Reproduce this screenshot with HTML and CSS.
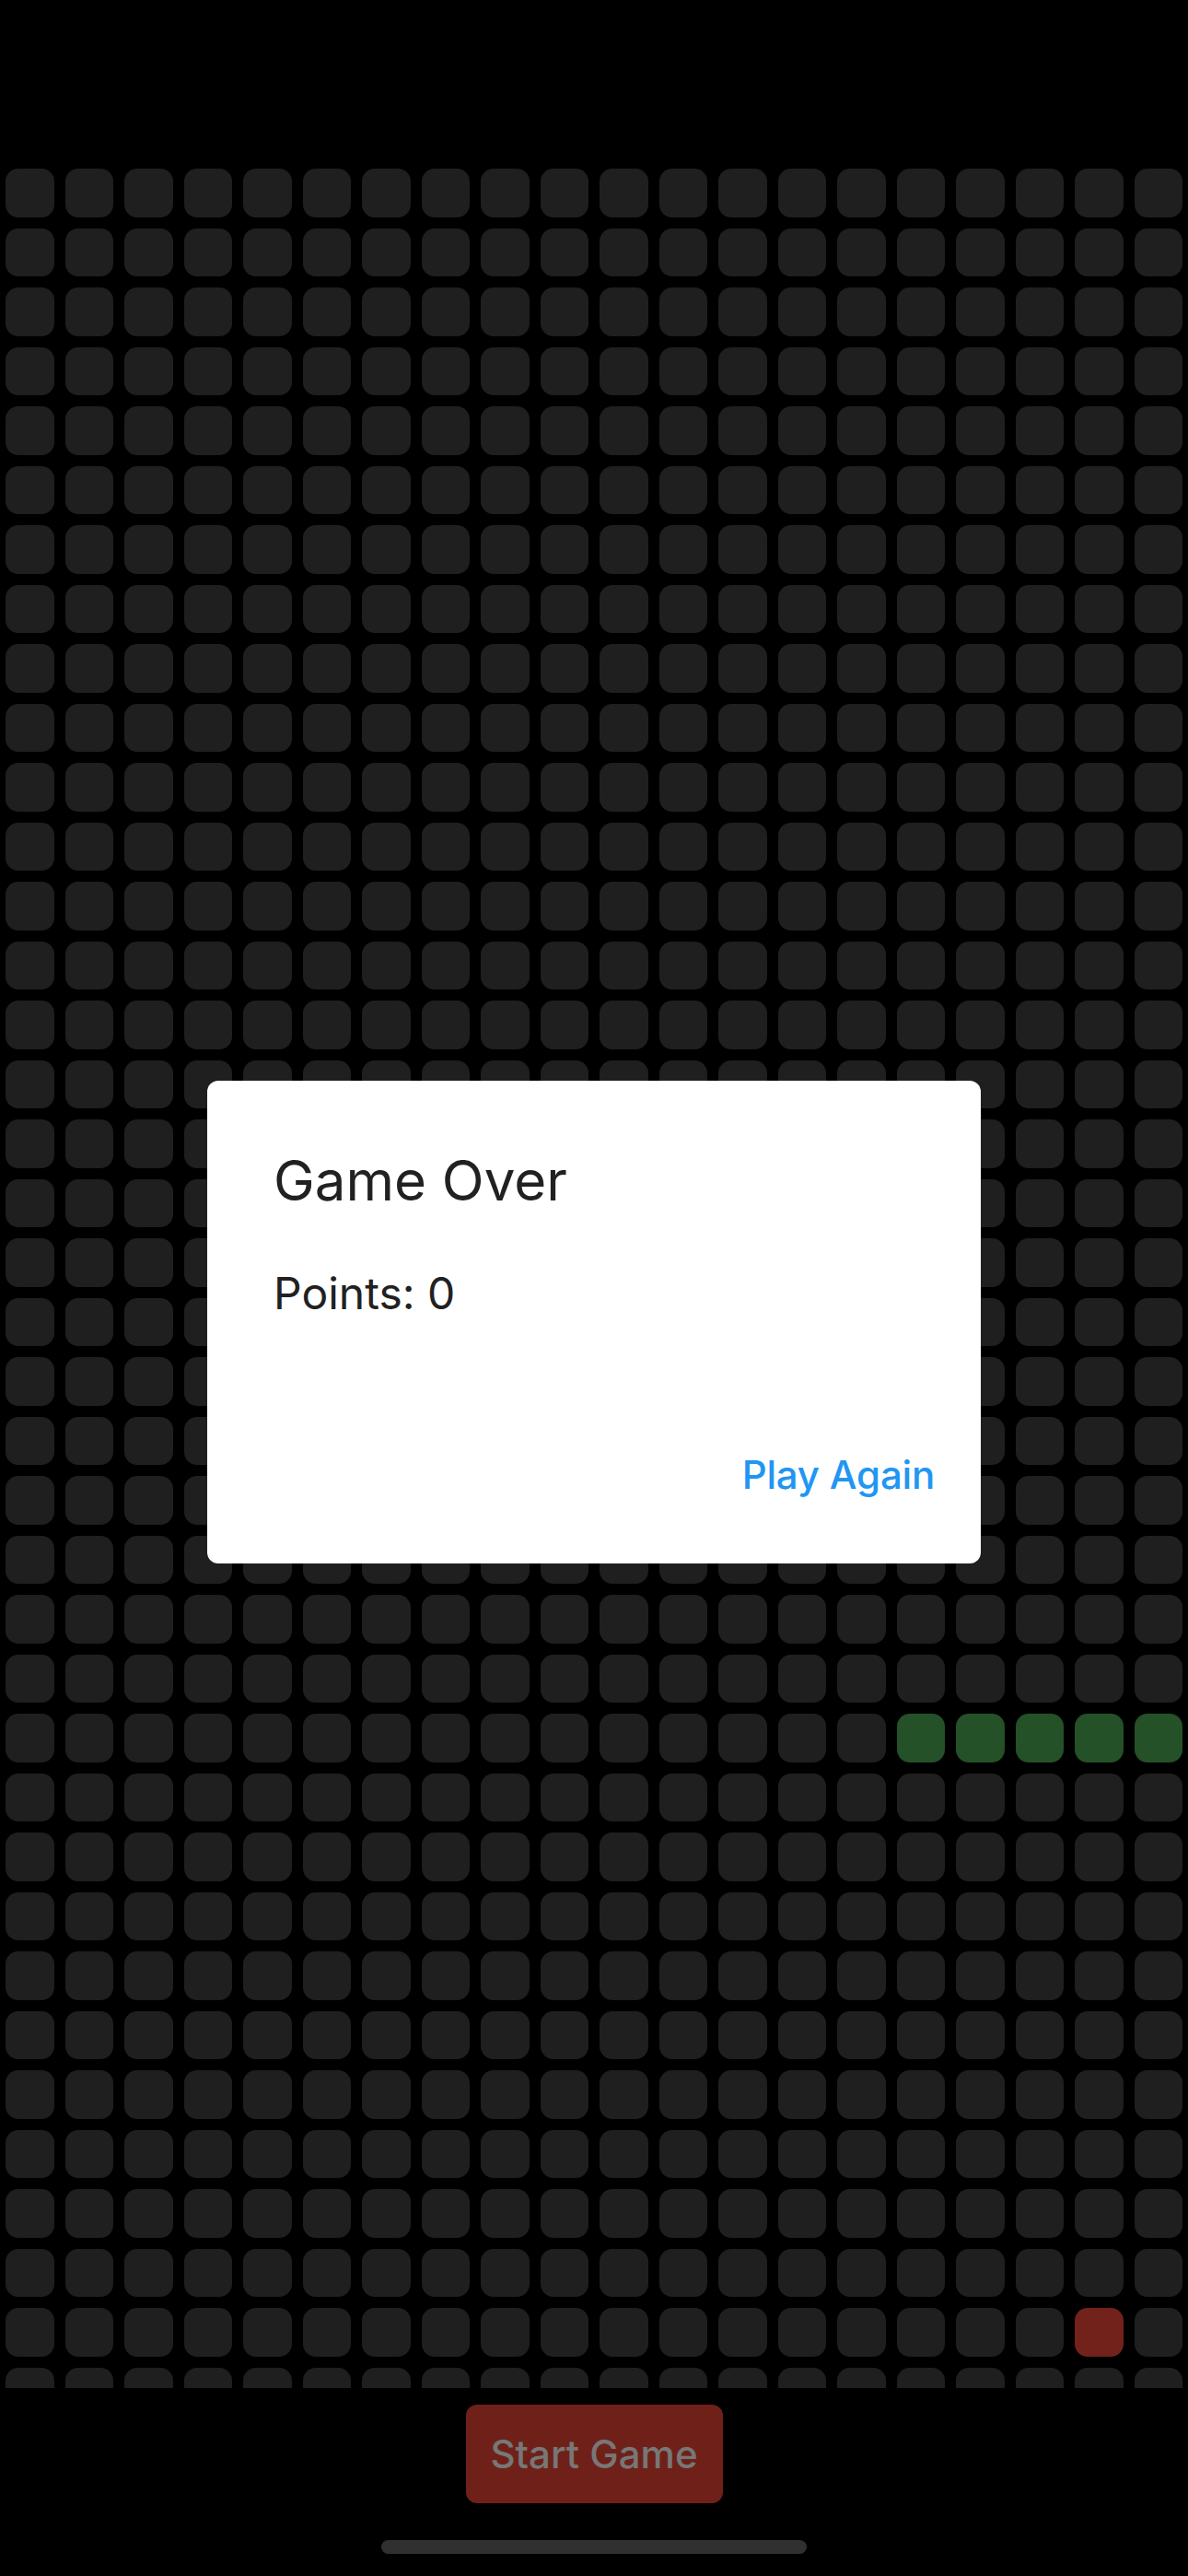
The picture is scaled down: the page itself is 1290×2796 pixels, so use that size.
FILE: index.html
```html
<!DOCTYPE html>
<html lang="en">
<head>
<meta charset="utf-8">
<title>Snake</title>
<link rel="stylesheet" href="styles.css">
</head>
<body>
<div class="screen">
  <div class="top-space"></div>
  <div class="board">
    <div class="grid" id="grid"></div>
  </div>
  <div class="controls">
    <button class="start-btn" type="button">Start Game</button>
  </div>
  <div class="home-indicator"></div>

  <div class="dialog" role="dialog">
    <h2 class="dialog-title">Game Over</h2>
    <p class="dialog-content">Points: 0</p>
    <div class="dialog-actions">
      <button class="text-btn" type="button">Play Again</button>
    </div>
  </div>
</div>
<script src="script.js"></script>
</body>
</html>
```

FILE: styles.css
```css
* {
  box-sizing: border-box;
}

html, body {
  margin: 0;
  padding: 0;
  background: #000;
}

body {
  font-family: Inter, "Noto Sans", "Liberation Sans", sans-serif;
}

.screen {
  position: relative;
  width: 1290px;
  height: 2796px;
  background: #000;
  overflow: hidden;
}

.top-space {
  height: 177px;
}

.board {
  height: 2415px;
  overflow: hidden;
}

.grid {
  display: grid;
  grid-template-columns: repeat(20, 64.5px);
  grid-auto-rows: 64.5px;
  width: 1290px;
}

.cell {
  margin: 6px;
  border-radius: 14px;
  background: #1f1f1f;
}

.cell.snake {
  background: #245128;
}

.cell.food {
  background: #72221b;
}

.controls {
  display: flex;
  justify-content: center;
  padding-top: 18px;
}

.start-btn {
  width: 279px;
  height: 107px;
  border: none;
  border-radius: 12px;
  background: #6f2119;
  color: #777777;
  font-family: Inter, "Noto Sans", "Liberation Sans", sans-serif;
  font-size: 42px;
  font-weight: 500;
  padding: 0;
  display: flex;
  align-items: center;
  justify-content: center;
}

.home-indicator {
  position: absolute;
  left: 414px;
  top: 2757px;
  width: 462px;
  height: 15px;
  border-radius: 8px;
  background: #303030;
}

.dialog {
  position: absolute;
  left: 225px;
  top: 1173px;
  width: 840px;
  height: 524px;
  background: #fff;
  border-radius: 12px;
  padding: 72px 50px 0 72px;
  display: flex;
  flex-direction: column;
}

.dialog-title {
  margin: 0;
  font-size: 60px;
  line-height: 72px;
  font-weight: 400;
  color: #212121;
}

.dialog-content {
  margin: 58px 0 0 0;
  font-size: 48px;
  line-height: 58px;
  font-weight: 400;
  color: #212121;
}

.dialog-actions {
  display: flex;
  justify-content: flex-end;
  margin-top: 143px;
}

.text-btn {
  border: none;
  background: transparent;
  padding: 0;
  font-family: Inter, "Noto Sans", "Liberation Sans", sans-serif;
  font-size: 42px;
  line-height: 50px;
  font-weight: 500;
  letter-spacing: -0.2px;
  color: #2196f3;
}
```

FILE: script.js
```js
(function () {
  var grid = document.getElementById('grid');
  var cols = 20, rows = 38;
  var frag = document.createDocumentFragment();
  for (var r = 0; r < rows; r++) {
    for (var c = 0; c < cols; c++) {
      var d = document.createElement('div');
      d.className = 'cell';
      if (r === 26 && c >= 15) d.className += ' snake';
      if (r === 36 && c === 18) d.className += ' food';
      frag.appendChild(d);
    }
  }
  grid.appendChild(frag);
})();
```
